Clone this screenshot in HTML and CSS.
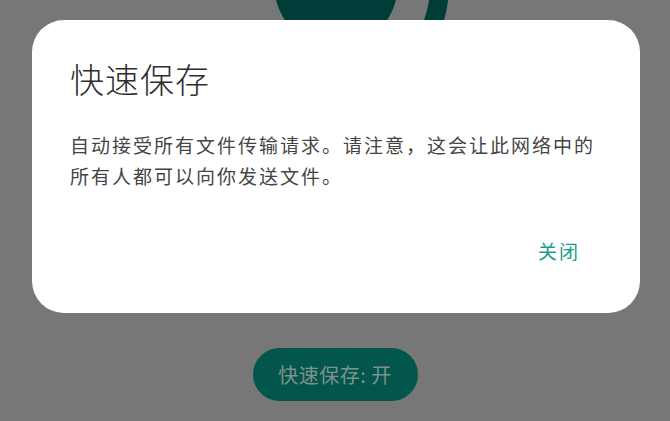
FILE: index.html
```html
<!DOCTYPE html>
<html lang="zh-CN">
<head>
<meta charset="UTF-8">
<meta name="viewport" content="width=device-width, initial-scale=1.0">
<title>快速保存</title>
<link rel="stylesheet" href="styles.css">
</head>
<body>
    <div class="screen">
        <div class="logo">
            <svg width="240" height="24" viewBox="0 0 240 24">
                <circle cx="121" cy="-14" r="61.5" fill="#003d39"/>
                <path d="M224 -20 A 103 103 0 0 1 217 26" fill="none" stroke="#003d39" stroke-width="19"/>
            </svg>
        </div>
        <button class="quickSave">快速保存: 开</button>
    </div>

    <div class="dialog">
        <h2 class="dialogTitle">快速保存</h2>
        <p class="dialogText">自动接受所有文件传输请求。请注意，这会让此网络中的所有人都可以向你发送文件。</p>
        <div class="dialogActions">
            <button class="textBtn">关闭</button>
        </div>
    </div>
</body>
</html>
```

FILE: styles.css
```css
  body {
    margin: 0;
    background-color: #777777;
    font-family: "Noto Sans CJK SC", "Noto Sans", sans-serif;
    overflow: hidden;
  }
  .screen {
    width: 670px;
    height: 421px;
    display: flex;
    flex-direction: column;
    align-items: center;
  }
  .logo {
    height: 24px;
  }
  .logo svg {
    display: block;
  }
  .quickSave {
    margin-top: 324px;
    width: 165px;
    height: 53px;
    border: none;
    border-radius: 27px;
    background-color: #03564b;
    color: #7f918c;
    font-family: inherit;
    font-size: 20px;
    letter-spacing: 0.5px;
  }

  /* modal on top of the scrim */
  .dialog {
    position: fixed;
    left: 32px;
    top: 20px;
    width: 608px;
    height: 293px;
    box-sizing: border-box;
    padding: 38px 38px 0 38px;
    background-color: #fff;
    border-radius: 32px;
  }
  .dialogTitle {
    margin: 0;
    font-size: 34px;
    line-height: 41px;
    font-weight: 300;
    letter-spacing: 1px;
    color: #2e2e2e;
  }
  .dialogText {
    margin: 30px 0 0 0;
    font-size: 19px;
    line-height: 31px;
    letter-spacing: 2px;
    color: #454545;
  }
  .dialogActions {
    display: flex;
    justify-content: flex-end;
    margin-top: 44px;
    padding-right: 22px;
  }
  .textBtn {
    border: none;
    background: none;
    padding: 0;
    font-family: inherit;
    font-size: 19px;
    line-height: 31px;
    letter-spacing: 2px;
    color: #1d9b8b;
  }
```
